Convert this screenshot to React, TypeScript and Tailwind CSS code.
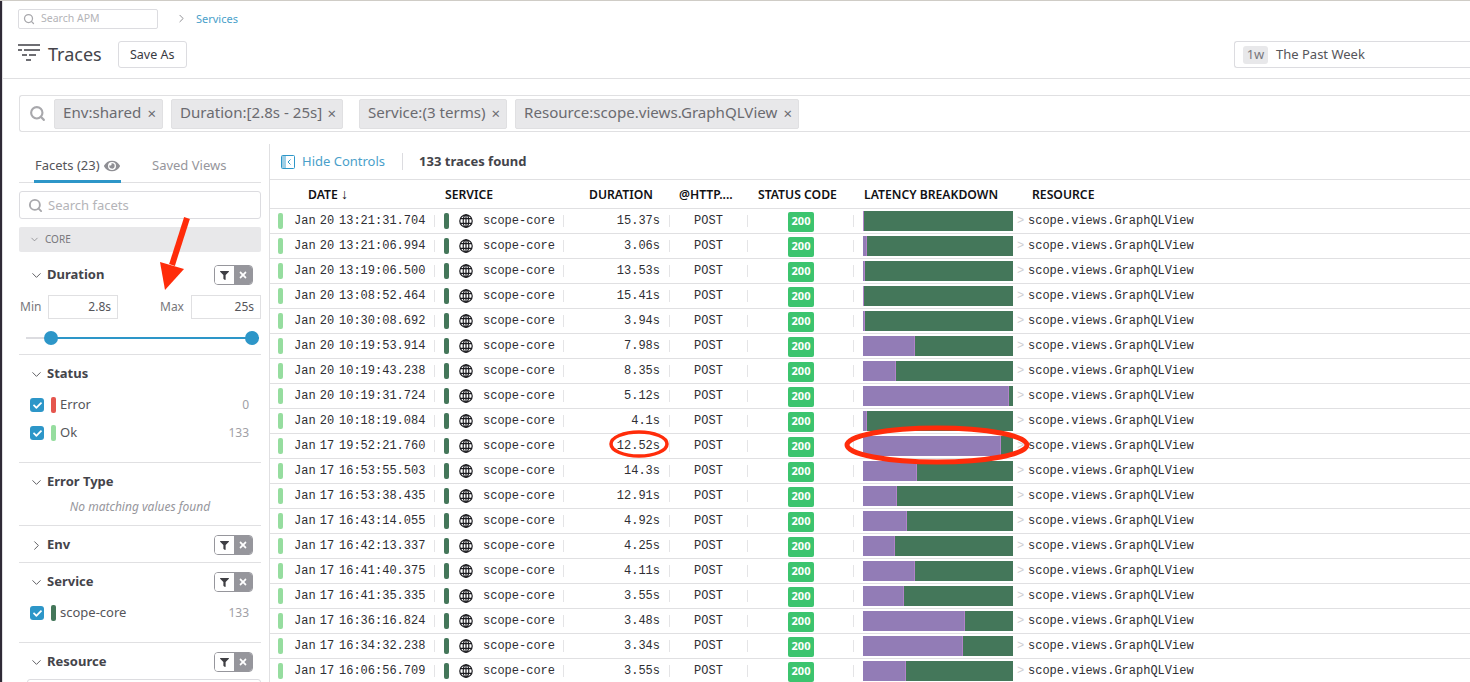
import { ChevronDown, ChevronRight, Search } from "lucide-react";
import { FaCheck, FaEye, FaFilter, FaTimes } from "react-icons/fa";

const rows: [string, string, string, number][] = [
  ["Jan 20", "13:21:31.704", "15.37s", 0],
  ["Jan 20", "13:21:06.994", "3.06s", 4],
  ["Jan 20", "13:19:06.500", "13.53s", 2],
  ["Jan 20", "13:08:52.464", "15.41s", 0],
  ["Jan 20", "10:30:08.692", "3.94s", 2],
  ["Jan 20", "10:19:53.914", "7.98s", 52],
  ["Jan 20", "10:19:43.238", "8.35s", 33],
  ["Jan 20", "10:19:31.724", "5.12s", 146],
  ["Jan 20", "10:18:19.084", "4.1s", 4],
  ["Jan 17", "19:52:21.760", "12.52s", 138],
  ["Jan 17", "16:53:55.503", "14.3s", 54],
  ["Jan 17", "16:53:38.435", "12.91s", 34],
  ["Jan 17", "16:43:14.055", "4.92s", 44],
  ["Jan 17", "16:42:13.337", "4.25s", 32],
  ["Jan 17", "16:41:40.375", "4.11s", 52],
  ["Jan 17", "16:41:35.335", "3.55s", 41],
  ["Jan 17", "16:36:16.824", "3.48s", 102],
  ["Jan 17", "16:34:32.238", "3.34s", 100],
  ["Jan 17", "16:06:56.709", "3.55s", 43],
];

const Chip = ({ label, width }: { label: string; width: string }) => (
  <div className={`${width} h-[30px] flex items-center justify-between pl-[8px] pr-[6px] pb-[3px] bg-[#e8e8ea] border border-[#e0e0e2] rounded-[2px] text-[15.1px] text-[#6b6b70]`}>
    <span>{label}</span>
    <span className="text-[15px] leading-none pt-[2px]">×</span>
  </div>
);

const FilterToggle = () => (
  <div className="flex w-[39px] h-[20px] rounded-[4px] border border-[#96969c] overflow-hidden">
    <div className="w-[19px] flex items-center justify-center bg-white">
      <FaFilter className="text-[#3f3f44] w-[9px] h-[9px]" />
    </div>
    <div className="flex-1 flex items-center justify-center bg-[#96969c]">
      <FaTimes className="text-white w-[10px] h-[10px]" />
    </div>
  </div>
);

const FacetHeader = ({ title, open = true, toggle = true }: { title: string; open?: boolean; toggle?: boolean }) => (
  <div className="flex items-center h-[20px] pl-[10px] pr-[8px]">
    {open ? (
      <ChevronDown className="w-[15px] h-[15px] text-[#55555a]" strokeWidth={1.5} />
    ) : (
      <ChevronRight className="w-[15px] h-[15px] text-[#55555a]" strokeWidth={1.5} />
    )}
    <span className="ml-[3px] text-[13px] font-bold text-[#44444a]">{title}</span>
    <div className="ml-auto">{toggle && <FilterToggle />}</div>
  </div>
);

const CheckRow = ({ label, count, color }: { label: string; count: string; color: string }) => (
  <div className="flex items-center h-[28px] pl-[11px] pr-[12px]">
    <div className="w-[14px] h-[14px] rounded-[3px] bg-[#2d96c8] flex items-center justify-center">
      <FaCheck className="text-white w-[9px] h-[9px]" />
    </div>
    <div className={`ml-[7px] w-[5px] h-[16px] rounded-[2px] ${color}`} />
    <span className="ml-[4px] text-[13px] text-[#55555a]">{label}</span>
    <span className="ml-auto text-[12px] text-[#a0a0a5]">{count}</span>
  </div>
);

const Sidebar = () => (
  <aside className="w-[242px] ml-[16px] shrink-0">
    <div className="h-[39px] flex border-b border-[#e0e0e2] text-[13px]">
      <div className="ml-[15px] w-[87px] h-[39px] border-b-[3px] border-[#2d96c8] flex items-center pl-[1px] gap-[4px] text-[#55555a] pt-[8px]">
        Facets (23) <FaEye className="text-[#8f8f94] w-[16px] h-[16px]" />
      </div>
      <div className="ml-[31px] h-[38px] flex items-center text-[#96969c] pt-[5px]">Saved Views</div>
    </div>
    <div className="mt-[8px] h-[28px] border border-[#dcdce0] rounded-[3px] flex items-center pl-[8px] pt-[1px] text-[13px] text-[#b4b4b8]">
      <Search className="w-[15px] h-[15px] text-[#a8a8ac]" strokeWidth={3} />
      <span className="ml-[5px]">Search facets</span>
    </div>
    <div className="mt-[8px] h-[25px] bg-[#e8e8ea] rounded-[2px] flex items-center pl-[10px] text-[10px] text-[#77777c]">
      <ChevronDown className="w-[11px] h-[11px]" strokeWidth={1.5} />
      <span className="ml-[5px]">CORE</span>
    </div>

    <div className="h-[103px] border-b border-[#e0e0e2] pt-[13px]">
      <FacetHeader title="Duration" />
      <div className="mt-[10px] flex items-center h-[24px] text-[12px] text-[#77777c]">
        <span className="ml-[1px] w-[28px]">Min</span>
        <div className="w-[70px] h-[24px] border border-[#e0e0e2] flex items-center justify-end pr-[6px] text-[#55555a]">2.8s</div>
        <span className="ml-[42px] w-[31px]">Max</span>
        <div className="w-[70px] h-[24px] border border-[#e0e0e2] flex items-center justify-end pr-[6px] text-[#55555a]">25s</div>
      </div>
      <div className="relative mt-[12px] ml-[7px] w-[233px] h-[14px] flex items-center">
        <div className="w-[25px] h-[2px] bg-[#dcdce0]" />
        <div className="flex-1 h-[2px] bg-[#2d96c8]" />
        <div className="absolute left-[18px] w-[14px] h-[14px] rounded-full bg-[#2d96c8]" />
        <div className="absolute right-0 w-[14px] h-[14px] rounded-full bg-[#2d96c8]" />
      </div>
    </div>

    <div className="h-[108px] border-b border-[#e0e0e2] pt-[9px]">
      <FacetHeader title="Status" toggle={false} />
      <div className="mt-[7px]">
        <CheckRow label="Error" count="0" color="bg-[#e5564e]" />
        <CheckRow label="Ok" count="133" color="bg-[#96dd9f]" />
      </div>
    </div>

    <div className="h-[63px] border-b border-[#e0e0e2] pt-[9px]">
      <FacetHeader title="Error Type" toggle={false} />
      <div className="mt-[6px] text-center text-[12px] italic text-[#96969c]">No matching values found</div>
    </div>

    <div className="h-[37px] border-b border-[#e0e0e2] pt-[9px]">
      <FacetHeader title="Env" open={false} />
    </div>

    <div className="h-[80px] border-b border-[#e0e0e2] pt-[9px]">
      <FacetHeader title="Service" />
      <div className="mt-[7px]">
        <CheckRow label="scope-core" count="133" color="bg-[#44775a]" />
      </div>
    </div>

    <div className="pt-[9px]">
      <FacetHeader title="Resource" />
      <div className="mt-[7px] ml-[8px] h-[28px] border border-[#dcdce0] rounded-[3px]" />
    </div>
  </aside>
);

const Divider = () => <div className="w-[1px] h-[12px] bg-[#e4e4e6]" />;

const GlobeIcon = () => (
  <svg viewBox="0 0 14 14" className="ml-[10px] w-[14px] h-[14px]" fill="none" stroke="#1c1c20" strokeWidth="1.2">
    <circle cx="7" cy="7" r="6.2" />
    <ellipse cx="7" cy="7" rx="2.8" ry="6.2" />
    <path d="M7 .8v12.4M1 4.6h12M1 9.4h12" />
  </svg>
);

const TraceRow = ({ date, time, duration, purple }: { date: string; time: string; duration: string; purple: number }) => (
  <div className="h-[25px] shrink-0 flex items-center border-b border-[#e0e0e2] font-['Liberation_Mono',monospace] text-[12px] text-[#2e2e33]">
    <div className="ml-[8px] w-[5px] h-[16px] rounded-[2px] bg-[#96dd9f]" />
    <span className="ml-[11px] w-[45px] [word-spacing:-3px]">{date}</span>
    <span className="w-[95px]">{time}</span>
    <Divider />
    <div className="ml-[9px] w-[5px] h-[16px] rounded-[2px] bg-[#44775a]" />
    <GlobeIcon />
    <span className="ml-[10px] w-[80px]">scope-core</span>
    <Divider />
    <span className="w-[96px] text-right">{duration}</span>
    <div className="ml-[9px]"><Divider /></div>
    <span className="w-[77px] text-center">POST</span>
    <Divider />
    <div className="ml-[40px] w-[26px] h-[20px] rounded-[2px] bg-[#3cc46e] flex items-center justify-center font-['Noto_Sans',sans-serif] text-[11px] font-bold text-white mt-[1px]">200</div>
    <div className="ml-[39px]"><Divider /></div>
    <div className="ml-[9px] w-[150px] h-[20px] flex bg-[#44775a]">
      <div style={{ width: purple }} className="h-full bg-[#927cb6] border-r border-[#b184c9]" />
    </div>
    <span className="ml-[4px] w-[11px] text-[#d0d0d4]">&gt;</span>
    <span>scope.views.GraphQLView</span>
  </div>
);

const TraceTable = () => (
  <main className="flex-1 ml-[8px] border-l border-[#e0e0e2] overflow-hidden">
    <div className="h-[35px] flex items-center pl-[11px] text-[13px]">
      <svg viewBox="0 0 14 14" className="w-[14px] h-[14px]" fill="none">
        <rect x="0.5" y="0.5" width="13" height="13" rx="1" stroke="#2d96c8" />
        <rect x="1" y="1" width="4" height="12" fill="#9fcfe6" />
        <path d="M9.5 4.5 7 7l2.5 2.5" stroke="#2d96c8" />
      </svg>
      <span className="ml-[7px] text-[#4a9fca]">Hide Controls</span>
      <div className="ml-[17px] w-[1px] h-[17px] bg-[#dcdce0]" />
      <span className="ml-[16px] font-bold text-[#44444a] text-[13px]">133 traces found</span>
    </div>
    <div className="h-[30px] pt-[2px] border-y border-[#e0e0e2] flex items-center text-[12.2px] font-semibold text-[#111114]">
      <span className="ml-[38px] w-[137px]">DATE <span className="text-[14px] leading-none">↓</span></span>
      <span className="w-[144px]">SERVICE</span>
      <span className="w-[90px]">DURATION</span>
      <span className="w-[79px]">@HTTP....</span>
      <span className="w-[106px]">STATUS CODE</span>
      <span className="w-[168px]">LATENCY BREAKDOWN</span>
      <span>RESOURCE</span>
    </div>
    {rows.map((r) => (
      <TraceRow key={r[1]} date={r[0]} time={r[1]} duration={r[2]} purple={r[3]} />
    ))}
  </main>
);

export default function App() {
  return (
    <div className="relative w-[1470px] h-[682px] overflow-hidden bg-white border-t border-[#cfccc6] font-['Noto_Sans',sans-serif] flex">
      <div className="w-[2px] shrink-0 bg-[#2f2a36]" />
      <div className="h-full flex-1 min-w-0 border-l border-[#e0e0e2] flex flex-col">
        <header className="h-[78px] shrink-0 border-b border-[#e0e0e2] pl-[15px]">
          <div className="pt-[8px] h-[40px] flex items-start">
            <div className="w-[140px] h-[20px] border border-[#dcdce0] rounded-[2px] flex items-center pl-[4px] text-[10.5px] text-[#b4b4b8]">
              <Search className="w-[12px] h-[12px] text-[#a8a8ac]" strokeWidth={2.5} />
              <span className="ml-[6px]">Search APM</span>
            </div>
            <ChevronRight className="ml-[17px] mt-[3px] w-[13px] h-[13px] text-[#77777c]" strokeWidth={1.5} />
            <span className="ml-[8px] mt-[2px] text-[11px] text-[#4a9fca]">Services</span>
          </div>
          <div className="flex items-start">
            <svg viewBox="0 0 22 20" className="w-[22px] h-[20px] mt-[3px]" fill="#6e6e73">
              <rect x="0" y="0" width="22" height="2" />
              <rect x="0" y="5" width="4" height="2" /><rect x="6" y="5" width="16" height="2" />
              <rect x="4" y="10" width="5" height="2" /><rect x="11" y="10" width="7" height="2" />
              <rect x="8" y="15" width="5" height="2" />
            </svg>
            <span className="ml-[8px] text-[18px] leading-[26px] text-[#44444a]">Traces</span>
            <button className="ml-[16px] w-[69px] h-[27px] pt-[1px] border border-[#dcdce0] rounded-[3px] text-[12.5px] text-[#3a3a3f]">Save As</button>
            <div className="ml-auto w-[236px] h-[27px] border border-[#dcdce0] border-r-0 rounded-l-[3px] flex items-center pl-[8px] text-[13px] text-[#55555a]">
              <span className="w-[25px] h-[18px] rounded-[3px] bg-[#e8e8ea] flex items-center justify-center text-[#77777c]">1w</span>
              <span className="ml-[8px]">The Past Week</span>
            </div>
          </div>
        </header>

        <div className="mt-[16px] ml-[16px] h-[37px] shrink-0 border border-r-0 border-[#e0e0e2] rounded-l-[3px] flex items-center">
          <Search className="ml-[9px] w-[17px] h-[17px] text-[#a8a8ac]" strokeWidth={3} />
          <div className="ml-[8px] flex">
            <Chip label="Env:shared" width="w-[109px]" />
            <div className="ml-[8px]"><Chip label="Duration:[2.8s - 25s]" width="w-[172px]" /></div>
            <div className="ml-[16px]"><Chip label="Service:(3 terms)" width="w-[148px]" /></div>
            <div className="ml-[8px]"><Chip label="Resource:scope.views.GraphQLView" width="w-[284px]" /></div>
          </div>
        </div>

        <div className="flex-1 flex min-h-0 mt-[12px]">
          <Sidebar />
          <TraceTable />
        </div>
      </div>

      {/* red annotations drawn over the screenshot */}
      <svg className="absolute left-0 top-[-1px] pointer-events-none" width="1470" height="682" fill="none">
        <path d="M187 218 172 265" stroke="#ff2c0a" strokeWidth="6" />
        <path d="M160 262 184 269 165 290Z" fill="#ff2c0a" />
        <ellipse cx="639" cy="444" rx="28" ry="12" stroke="#ff2c0a" strokeWidth="3.5" />
        <ellipse cx="937" cy="445" rx="90" ry="17" stroke="#ff2c0a" strokeWidth="5" />
      </svg>
    </div>
  );
}
